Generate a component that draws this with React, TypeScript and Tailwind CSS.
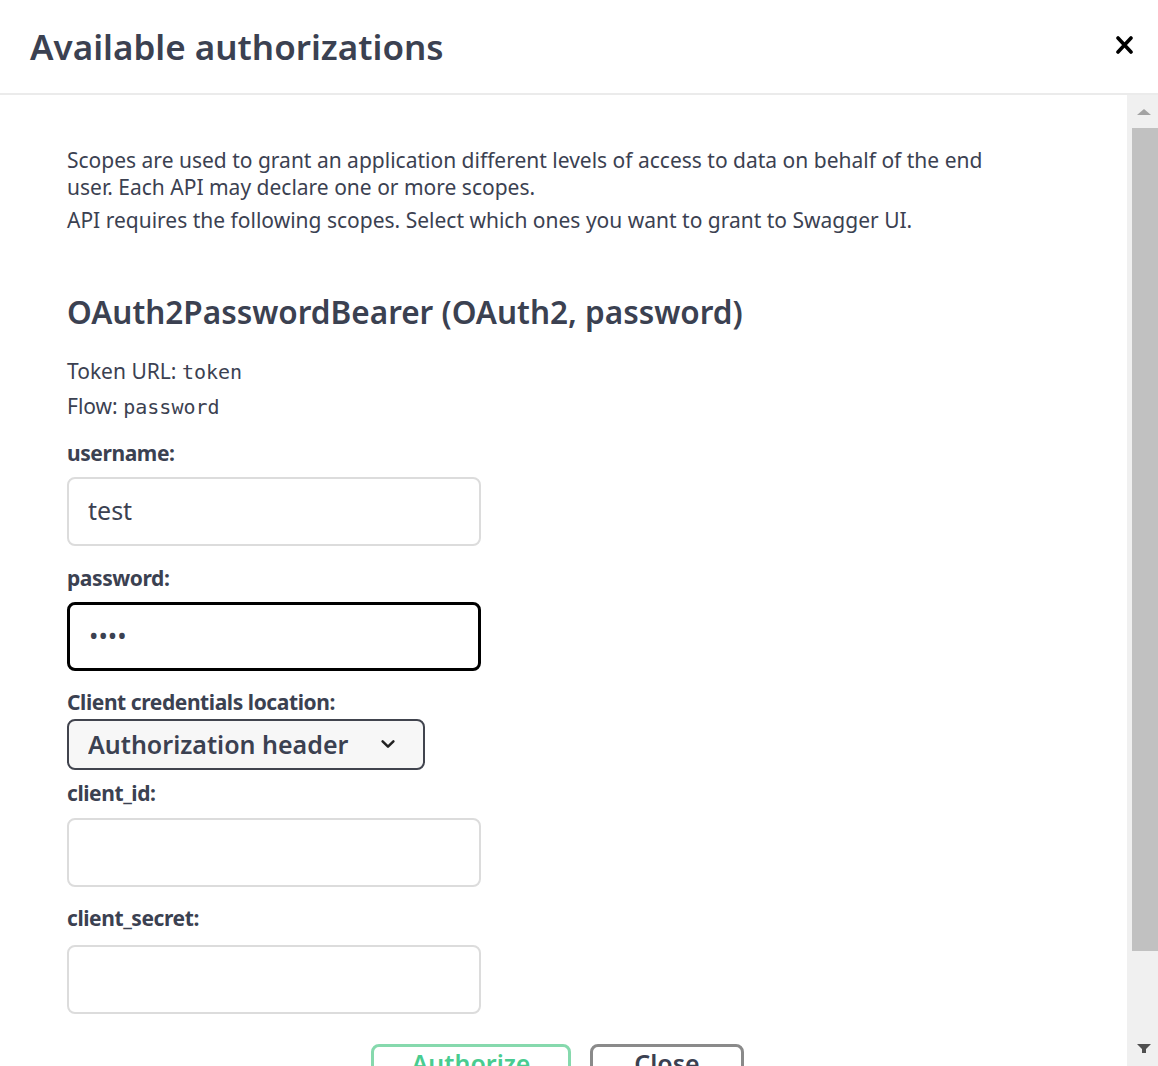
import React from "react";

const font = { fontFamily: '"Noto Sans", "Open Sans", sans-serif' };
const mono = { fontFamily: '"DejaVu Sans Mono", monospace' };

function Label({ children, className = "" }: { children: React.ReactNode; className?: string }) {
  return (
    <div className={`h-[30px] text-[21px] font-bold leading-[30px] tracking-[-0.02em] text-[#3b4151] ${className}`}>
      {children}
    </div>
  );
}

function TextInput({
  value,
  type = "text",
  focused = false,
  className = "",
}: {
  value?: string;
  type?: string;
  focused?: boolean;
  className?: string;
}) {
  return (
    <input
      type={type}
      readOnly
      defaultValue={value}
      className={`block h-[69px] w-[414px] rounded-[8px] bg-white px-[19px] pb-[3px] text-[25px] text-[#3b4151] outline-none ${
        focused ? "border-[3px] border-black" : "border-2 border-[#dcdcdc]"
      } ${className}`}
      style={font}
    />
  );
}

export default function App() {
  return (
    <div className="flex h-[1066px] w-[1158px] flex-col overflow-hidden bg-white text-[#3b4151]" style={font}>
      {/* Header */}
      <div className="flex h-[95px] shrink-0 items-center justify-between border-b-2 border-[#ebebeb] pl-[30px] pr-[25px]">
        <h3 className="text-[35px] font-semibold leading-none text-[#3b4151]">Available authorizations</h3>
        <button className="mb-[4px] flex h-[18px] w-[17px] items-center justify-center">
          <svg viewBox="0 0 17 18" className="h-[18px] w-[17px]">
            <path d="M2 2 L15 16 M15 2 L2 16" stroke="#000" strokeWidth="3.6" strokeLinecap="round" fill="none" />
          </svg>
        </button>
      </div>

      <div className="flex min-h-0 flex-1">
        {/* Content */}
        <div className="min-w-0 flex-1 overflow-hidden pl-[67px] pt-[52px]">
          <p className="w-[945px] text-[21px] leading-[27px] text-[#3b4151]">
            Scopes are used to grant an application different levels of access to data on behalf of the end user. Each API may
            declare one or more scopes.
          </p>
          <p className="mt-[6px] text-[21px] leading-[27px] text-[#3b4151]">
            API requires the following scopes. Select which ones you want to grant to Swagger UI.
          </p>

          <h4 className="mt-[58px] text-[31.5px] font-semibold leading-[40px] text-[#3b4151]">
            OAuth2PasswordBearer (OAuth2, password)
          </h4>

          <p className="mt-[24px] text-[21px] leading-[30px]">
            Token URL:{" "}
            <code className="text-[20px]" style={mono}>
              token
            </code>
          </p>
          <p className="mt-[4px] text-[21px] leading-[30px]">
            Flow:{" "}
            <code className="text-[20px]" style={mono}>
              password
            </code>
          </p>

          <Label className="mt-[16px]">username:</Label>
          <TextInput value="test" className="mt-[9px]" />

          <Label className="mt-[17px]">password:</Label>
          <TextInput value="test" type="password" focused className="mt-[9px]" />

          <Label className="mt-[16px]">Client credentials location:</Label>
          <div className="relative mt-[2px] w-[358px]">
            <select
              className="block h-[51px] w-[358px] appearance-none rounded-[8px] border-2 border-[#41444e] bg-[#f7f7f7] pl-[19px] text-[25px] font-semibold text-[#3b4151] outline-none"
              style={font}
              defaultValue="header"
            >
              <option value="header">Authorization header</option>
              <option value="request-body">Request body</option>
            </select>
            <svg
              viewBox="0 0 20 20"
              className="pointer-events-none absolute right-[28px] top-[16px] h-[18px] w-[18px]"
            >
              <path d="M4 7 L10 13 L16 7" stroke="#222" strokeWidth="2.8" fill="none" strokeLinecap="round" strokeLinejoin="round" />
            </svg>
          </div>

          <Label className="mt-[8px]">client_id:</Label>
          <TextInput className="mt-[10px]" />

          <Label className="mt-[16px]">client_secret:</Label>
          <TextInput className="mt-[12px]" />

          <div className="mt-[30px] flex justify-center gap-[19px] pr-[79px]">
            <button className="flex h-[56px] w-[200px] items-start justify-center rounded-[8px] border-[3px] border-[#86d9ad] pt-[1px] text-[25px] font-semibold leading-[30px] text-[#49cc90]">
              Authorize
            </button>
            <button className="flex h-[56px] w-[154px] items-start justify-center rounded-[8px] border-[3px] border-[#8a8a8a] pt-[1px] text-[25px] font-semibold leading-[30px] text-[#3b4151]">
              Close
            </button>
          </div>
        </div>

        {/* Scrollbar */}
        <div className="flex w-[31px] shrink-0 flex-col items-center bg-[#f0f0f0]">
          <div className="flex h-[33px] items-center justify-center pl-[2px]">
            <svg viewBox="0 0 14 6" className="h-[6px] w-[14px]">
              <path d="M0 6 L7 0 L14 6 Z" fill="#a3a3a3" />
            </svg>
          </div>
          <div className="ml-[4px] h-[823px] w-[26px] bg-[#c1c1c1]" />
          <div className="flex flex-1 items-end justify-center pb-[13px] pl-[2px]">
            <svg viewBox="0 0 14 9" className="h-[9px] w-[14px]">
              <path d="M0 0 L14 0 L9 5 L9 9 L5 9 L5 5 Z" fill="#505050" />
            </svg>
          </div>
        </div>
      </div>
    </div>
  );
}
